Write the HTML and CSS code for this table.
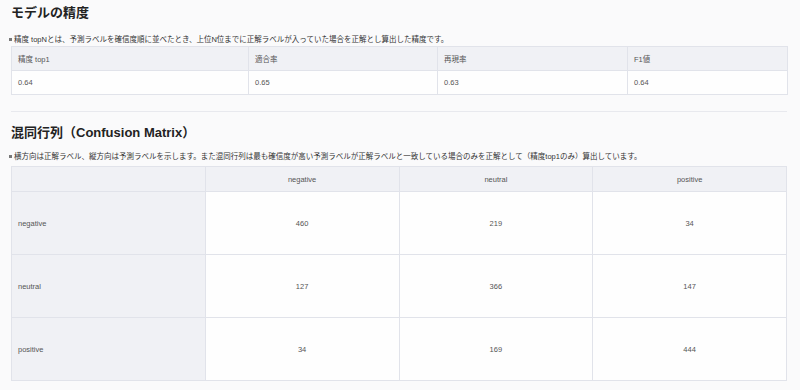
FILE: index.html
```html
<!DOCTYPE html>
<html lang="ja">
<head>
    <meta charset="UTF-8">
    <meta name="viewport" content="width=device-width, initial-scale=1.0">
    <title>モデルの精度</title>
    <link rel="stylesheet" href="styles.css">
</head>
<body>

    <section class="section">
        <h2 class="section-title">モデルの精度</h2>
        <p class="note note-accuracy">精度 topNとは、予測ラベルを確信度順に並べたとき、上位N位までに正解ラベルが入っていた場合を正解とし算出した精度です。</p>
        <table class="metric-table">
            <colgroup>
                <col class="col-a">
                <col class="col-b">
                <col class="col-c">
                <col class="col-d">
            </colgroup>
            <thead>
                <tr>
                    <th>精度 top1</th>
                    <th>適合率</th>
                    <th>再現率</th>
                    <th>F1値</th>
                </tr>
            </thead>
            <tbody>
                <tr>
                    <td>0.64</td>
                    <td>0.65</td>
                    <td>0.63</td>
                    <td>0.64</td>
                </tr>
            </tbody>
        </table>
    </section>

    <hr class="divider">

    <section class="section">
        <h2 class="section-title title-matrix">混同行列（Confusion Matrix）</h2>
        <p class="note note-matrix">横方向は正解ラベル、縦方向は予測ラベルを示します。また混同行列は最も確信度が高い予測ラベルが正解ラベルと一致している場合のみを正解として（精度top1のみ）算出しています。</p>
        <table class="matrix-table">
            <thead>
                <tr>
                    <th></th>
                    <th>negative</th>
                    <th>neutral</th>
                    <th>positive</th>
                </tr>
            </thead>
            <tbody>
                <tr>
                    <th>negative</th>
                    <td>460</td>
                    <td>219</td>
                    <td>34</td>
                </tr>
                <tr>
                    <th>neutral</th>
                    <td>127</td>
                    <td>366</td>
                    <td>147</td>
                </tr>
                <tr>
                    <th>positive</th>
                    <td>34</td>
                    <td>169</td>
                    <td>444</td>
                </tr>
            </tbody>
        </table>
    </section>

</body>
</html>
```

FILE: styles.css
```css
body {
    background: #fafafb;
    font-family: "Liberation Sans", "Noto Sans CJK JP", sans-serif;
    margin: 0;
    padding: 4px 13px 0 11px;
    color: #333;
}

.section-title {
    margin: 0;
    font-size: 13px;
    line-height: 18px;
    font-weight: bold;
    color: #222;
}

.title-matrix {
    margin-top: 12px;
}

.note {
    margin: 0;
    font-size: 7.5px;
    line-height: 12px;
    color: #333;
    white-space: nowrap;
    position: relative;
    left: -2px;
}

.note::before {
    content: "";
    display: inline-block;
    width: 3px;
    height: 3px;
    background: #777;
    margin-right: 2px;
    vertical-align: 1px;
}

.note-accuracy {
    margin-top: 12px;
}

.note-matrix {
    margin-top: 9px;
    margin-bottom: 3px;
}

table {
    width: 100%;
    border-collapse: collapse;
    table-layout: fixed;
    background: #fefefe;
    border: 1px solid #e1e3ea;
    font-size: 7.5px;
    color: #555;
}

th, td {
    border: 1px solid #e1e3ea;
    font-weight: normal;
    padding: 0 6px;
}

thead th {
    background: #f0f1f5;
}

.metric-table th,
.metric-table td {
    height: 23px;
    text-align: left;
}

.col-a { width: 237px; }
.col-b { width: 189px; }
.col-c { width: 190px; }
.col-d { width: 160px; }

.divider {
    border: none;
    border-top: 1px solid #e8e9ee;
    margin: 16px 0 0;
}

.matrix-table thead th {
    height: 24px;
    text-align: center;
}

.matrix-table tbody th {
    background: #f0f1f5;
    text-align: left;
}

.matrix-table tbody th,
.matrix-table tbody td {
    height: 62px;
}

.matrix-table td {
    text-align: center;
}
```
